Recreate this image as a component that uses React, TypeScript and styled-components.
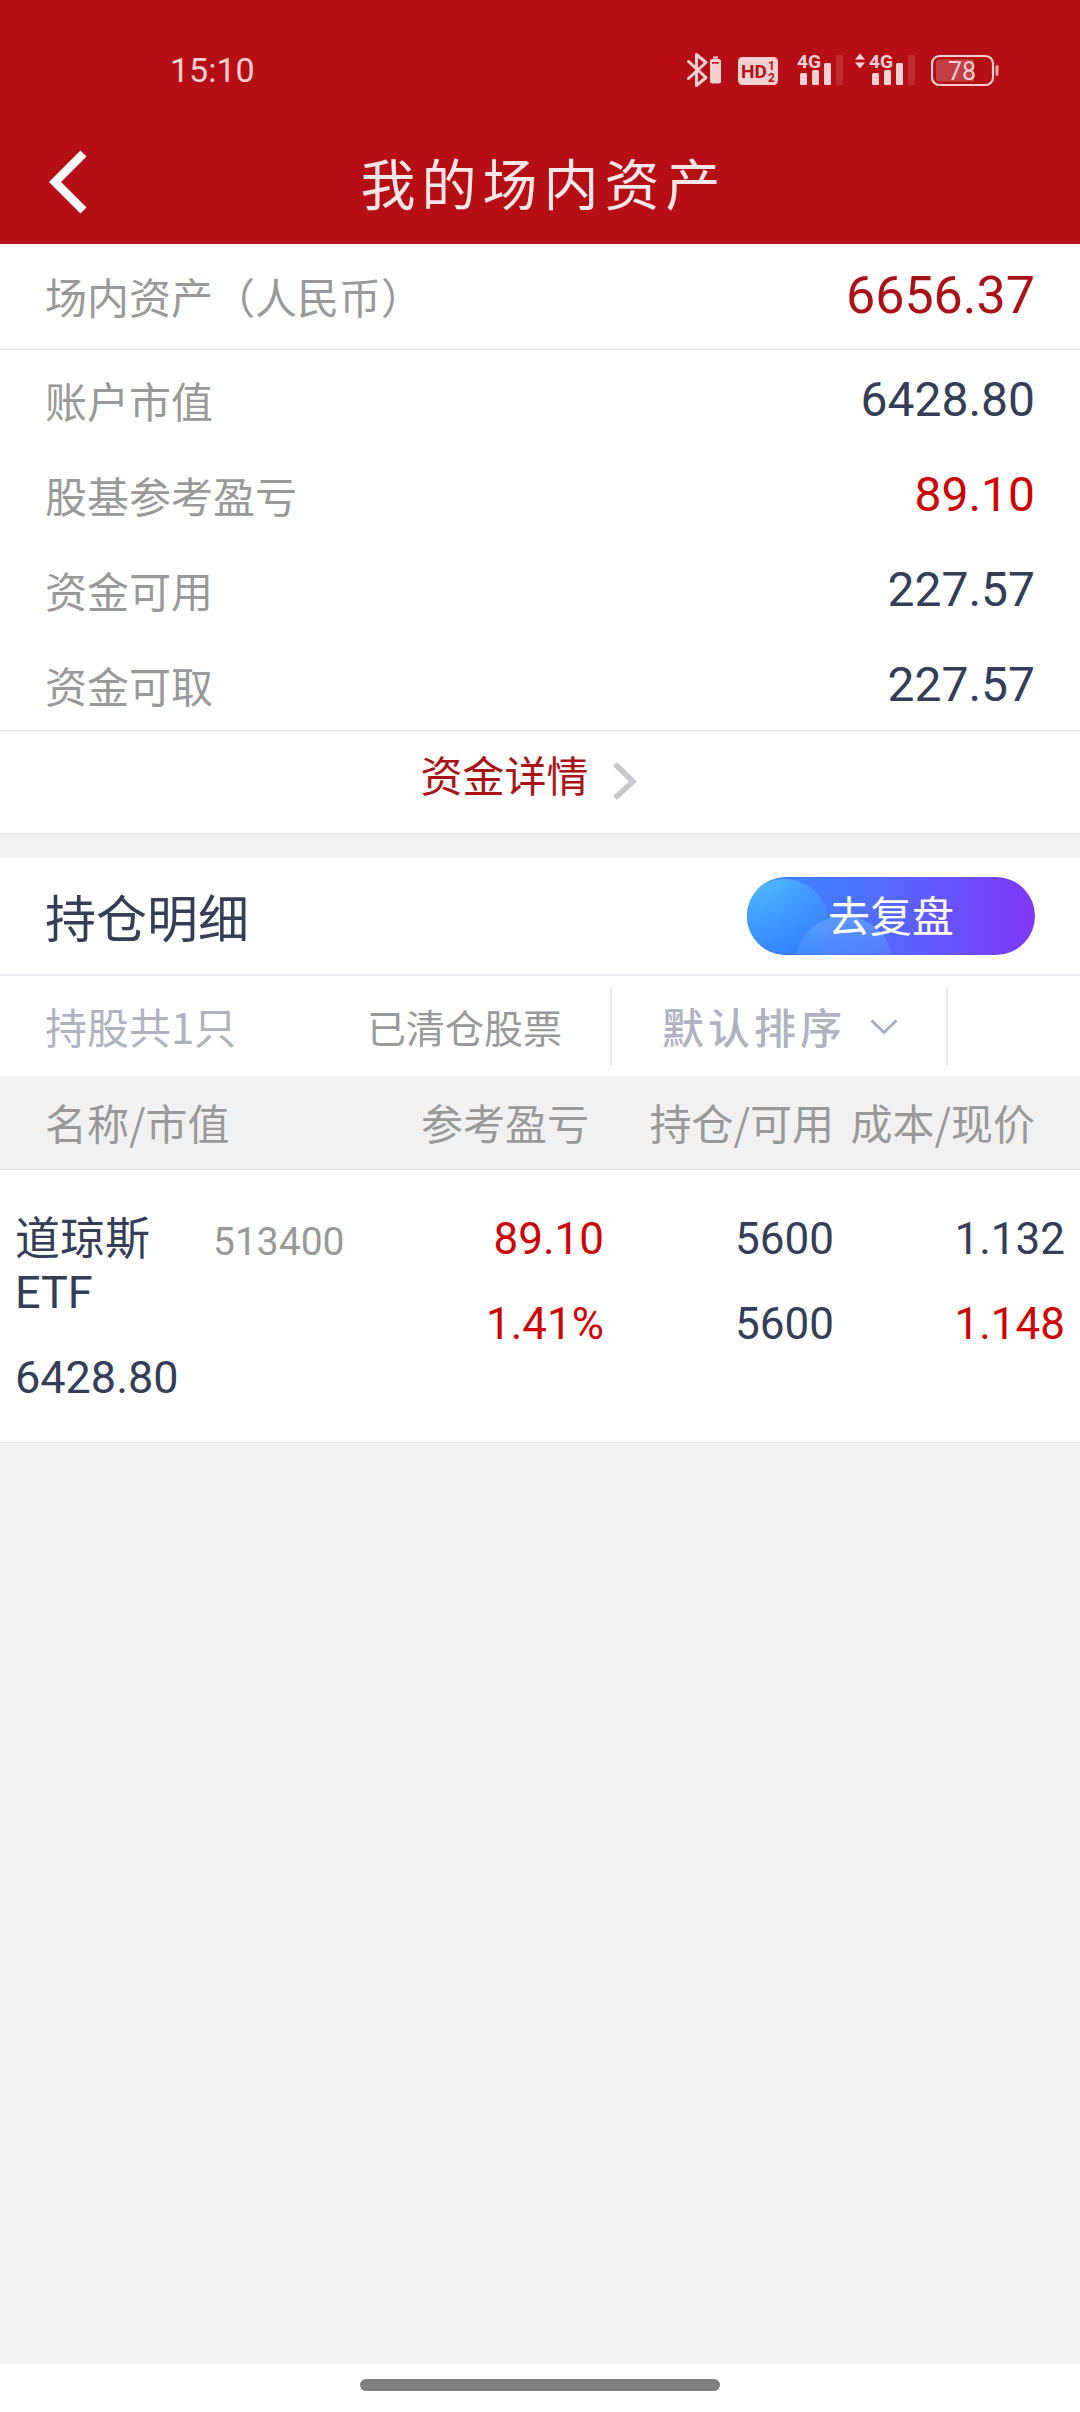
import React from "react";
import styled, { createGlobalStyle } from "styled-components";

const cjk = `"Noto Sans CJK SC", Roboto, sans-serif`;
const latin = `Roboto, "Noto Sans CJK SC", sans-serif`;

const color = {
  brand: "#b50f15",
  red: "#cc0505",
  deepRed: "#aa1217",
  ink: "#363d56",
  grey: "#999999",
  muted: "#b0b3be",
  line: "#e3e4e5",
  divider: "#e6eaef",
  page: "#f1f1f1",
  status: "#f5d0d3",
};

const tones = { ink: color.ink, red: color.red, deep: color.deepRed };
type Tone = keyof typeof tones;

const GlobalStyle = createGlobalStyle`
  * { box-sizing: border-box; }
  body { margin: 0; background: ${color.page}; }
  button, select { font: inherit; color: inherit; border: 0; padding: 0; background: none; cursor: pointer; }
  svg { display: block; flex: none; }
`;

const Screen = styled.div`
  display: flex;
  flex-direction: column;
  min-height: 100vh;
  font-family: ${cjk};
  font-size: 42px;
  line-height: 54px;
  color: ${color.grey};
`;

const Header = styled.header`
  background: ${color.brand};
`;

const StatusBar = styled.div`
  display: flex;
  align-items: center;
  justify-content: space-between;
  height: 120px;
  padding: 20px 81px 0 170px;
  color: ${color.status};
`;

const Clock = styled.time`
  font-family: Roboto, sans-serif;
  font-size: 34px;
`;

const StatusIcons = styled.div`
  display: flex;
  gap: 12px;
`;

const NavBar = styled.div`
  display: grid;
  grid-template-columns: 135px 1fr 135px;
  align-items: center;
  height: 124px;
`;

const BackButton = styled.button`
  display: flex;
  align-items: center;
  height: 100%;
  padding-left: 48px;
`;

const PageTitle = styled.h1`
  margin: 0;
  padding: 0 0 2px 7px;
  font-size: 55px;
  font-weight: 400;
  letter-spacing: 6px;
  text-align: center;
  color: #f6e6e7;
`;

const Summary = styled.section`
  background: #fff;
  border-bottom: 1px solid ${color.line};
`;

const SummaryRow = styled.div`
  display: flex;
  align-items: center;
  justify-content: space-between;
  padding: 0 45px;
`;

const TotalRow = styled(SummaryRow)`
  padding: 25px 45px 26px;
  border-bottom: 1px solid ${color.line};
`;

const SummaryList = styled.div`
  display: flex;
  flex-direction: column;
  gap: 41px;
  padding: 23px 0 18px;
`;

const Amount = styled.span<{ $tone?: Tone; $large?: boolean }>`
  font-family: ${latin};
  font-size: ${(p) => (p.$large ? 52 : 48)}px;
  color: ${(p) => tones[p.$tone ?? "ink"]};
`;

const DetailLink = styled.a`
  display: flex;
  align-items: flex-end;
  justify-content: center;
  gap: 23px;
  padding: 16px 22px 32px 0;
  border-top: 1px solid ${color.line};
  color: ${color.deepRed};
  text-decoration: none;
`;

const Holdings = styled.section`
  margin-top: 24px;
  background: #fff;
  border-bottom: 1px solid ${color.line};
`;

const HoldingsHead = styled.div`
  display: flex;
  align-items: center;
  justify-content: space-between;
  padding: 19px 45px;
  border-bottom: 2px solid ${color.divider};
`;

const SectionTitle = styled.h2`
  margin: 0;
  font-size: 51px;
  font-weight: 400;
  color: ${color.ink};
`;

const ReviewButton = styled.button`
  position: relative;
  width: 288px;
  height: 78px;
  padding-bottom: 4px;
  border-radius: 39px;
  overflow: hidden;
  color: #fff;
  background: linear-gradient(90deg, #2f8bff 0%, #4a74ff 36%, #5a62fd 55%, #8037f7 100%);
`;

const ReviewArt = styled.svg`
  position: absolute;
  inset: 0;
`;

const ReviewLabel = styled.span`
  position: relative;
`;

const FilterBar = styled.div`
  display: grid;
  grid-template-columns: 1fr 338px 132px;
  align-items: center;
  height: 100px;
`;

const FilterInfo = styled.div`
  display: flex;
  align-items: center;
  justify-content: space-between;
  padding: 0 48px 0 45px;
  color: ${color.muted};
`;

const ClearedButton = styled.button`
  font-size: 39px;
  color: ${color.grey};
`;

const SortBox = styled.div`
  position: relative;
  border: solid ${color.divider};
  border-width: 0 2px;
`;

const SortSelect = styled.select`
  display: block;
  appearance: none;
  width: 100%;
  height: 78px;
  padding-left: 50px;
  font-weight: 500;
  letter-spacing: 4px;
  color: ${color.muted};
`;

const SortArrow = styled.svg`
  position: absolute;
  top: 32px;
  right: 48px;
  pointer-events: none;
`;

const Table = styled.table`
  width: 100%;
  table-layout: fixed;
  border-collapse: separate;
  border-spacing: 0;
`;

const HeadCell = styled.th<{ $left?: boolean; $last?: boolean }>`
  width: ${(p) => (p.$left ? "auto" : p.$last ? "246px" : "230px")};
  height: 94px;
  padding: 0 ${(p) => (p.$last ? 45 : 0)}px 2px ${(p) => (p.$left ? 45 : 0)}px;
  font-weight: 400;
  text-align: ${(p) => (p.$left ? "left" : "right")};
  white-space: nowrap;
  background: ${color.page};
  border-bottom: 1px solid ${color.line};
`;

const ProfitHeadCell = styled(HeadCell)`
  padding-right: 15px;
`;

const Cell = styled.td<{ $left?: boolean; $last?: boolean }>`
  padding: 43px ${(p) => (p.$last ? 15 : 0)}px 38px ${(p) => (p.$left ? 15 : 0)}px;
  vertical-align: top;
  text-align: ${(p) => (p.$left ? "left" : "right")};
  font-family: ${latin};
  font-size: ${(p) => (p.$left ? 45 : 44)}px;
  line-height: 53px;
  color: ${color.ink};
`;

const Stack = styled.div`
  display: flex;
  flex-direction: column;
  gap: 32px;
`;

const Figure = styled.span<{ $tone?: Tone }>`
  color: ${(p) => tones[p.$tone ?? "ink"]};
`;

const NameLine = styled.div`
  display: grid;
  grid-template-columns: 198px 1fr;
  align-items: baseline;
`;

const StockName = styled.span`
  padding-right: 48px;
`;

const StockCode = styled.span`
  font-size: 39px;
  color: ${color.grey};
`;

const GestureArea = styled.footer`
  display: flex;
  align-items: center;
  justify-content: center;
  height: 48px;
  margin-top: auto;
  padding-bottom: 6px;
  background: #fff;
`;

const GesturePill = styled.div`
  width: 360px;
  height: 12px;
  border-radius: 6px;
  background: #808080;
`;

const BluetoothIcon = () => (
  <svg width="39" height="42" viewBox="0 -4 39 42" aria-hidden="true">
    <path
      d="M1.500 8.500 19 24.500 9.500 32.500V1.500L19 9.500 1.500 25.500"
      fill="none"
      stroke={color.status}
      strokeWidth="3"
      strokeLinejoin="round"
      strokeLinecap="round"
    />
    <rect x="26" y="3.500" width="5" height="2" fill={color.status} />
    <rect x="23" y="6" width="11" height="24.500" rx="2.500" fill={color.status} />
    <rect x="25" y="9" width="7" height="1.600" fill={color.brand} />
  </svg>
);

const HdIcon = () => (
  <svg width="44" height="42" viewBox="0 -4 44 42" fontFamily="Roboto, sans-serif" fontWeight="700" aria-hidden="true">
    <rect y="4" width="40" height="28" rx="4.500" fill={color.status} />
    <text x="3" y="25" fontSize="19" fill={color.brand}>HD</text>
    <text x="30" y="17" fontSize="12" fill={color.brand}>1</text>
    <text x="30" y="29" fontSize="12" fill={color.brand}>2</text>
  </svg>
);

const SignalIcon = ({ data }: { data?: boolean }) => {
  const x = data ? 17 : 6;
  const width = data ? 64 : 49;
  return (
    <svg width={width} height="42" viewBox={`0 -4 ${width} 42`} fill={color.status} aria-hidden="true">
      {data && <path d="M0 6.500 5 .5l5 6zM0 9.500h10l-5 6z" />}
      <text x={x - 3} y="15" fontSize="19" fontFamily="Roboto, sans-serif" fontWeight="700">4G</text>
      <rect x={x} y="20" width="7" height="12" rx="1.500" />
      <rect x={x + 12} y="17" width="7" height="15" rx="1.500" />
      <rect x={x + 24} y="10" width="7" height="22" rx="1.500" />
      <rect x={x + 36} y="2" width="7" height="30" rx="1.500" opacity="0.150" />
    </svg>
  );
};

const BatteryIcon = () => (
  <svg width="68" height="42" viewBox="0 -4 68 42" aria-hidden="true">
    <rect x="1" y="3" width="61" height="29" rx="7.500" fill="none" stroke={color.status} strokeWidth="2.200" />
    <path d="M8 6.500h35v22H8a3 3 0 0 1-3-3v-16a3 3 0 0 1 3-3z" fill={color.status} opacity="0.250" />
    <rect x="64.500" y="12" width="3" height="11" rx="1.500" fill={color.status} opacity="0.800" />
    <text x="17" y="26.500" fontSize="25" fontFamily="Roboto, sans-serif" fill={color.status}>78</text>
  </svg>
);

const BackIcon = () => (
  <svg width="40" height="64" viewBox="0 0 40 64" aria-hidden="true">
    <path d="M35.500 3.500 7 32l28.500 28.500" fill="none" stroke="#fff" strokeWidth="8.500" />
  </svg>
);

const ArrowIcon = () => (
  <svg width="26" height="40" viewBox="0 0 26 40" aria-hidden="true">
    <path d="M3 3 21 20.500 3 37" fill="none" stroke="#c8c8cc" strokeWidth="5.500" />
  </svg>
);

const ReviewBackdrop = () => (
  <ReviewArt width="288" height="78" viewBox="0 0 288 78" aria-hidden="true">
    <defs>
      <linearGradient id="bubbleA" x1="0.300" y1="0" x2="0.600" y2="1">
        <stop offset="0" stopColor="#4fb6ff" />
        <stop offset="1" stopColor="#2b78ff" />
      </linearGradient>
      <linearGradient id="bubbleB" x1="0" y1="0" x2="0" y2="1">
        <stop offset="0" stopColor="#62a4ff" stopOpacity="0.750" />
        <stop offset="0.450" stopColor="#62a4ff" stopOpacity="0.200" />
      </linearGradient>
      <linearGradient id="bubbleFade" x1="0" y1="0" x2="1" y2="0">
        <stop offset="0.400" stopColor="#fff" />
        <stop offset="1" stopColor="#fff" stopOpacity="0.500" />
      </linearGradient>
      <mask id="bubbleMask">
        <rect width="92" height="92" y="0" x="-8" fill="url(#bubbleFade)" />
      </mask>
    </defs>
    <circle cx="37" cy="47" r="45" fill="url(#bubbleA)" mask="url(#bubbleMask)" />
    <circle cx="97" cy="88" r="49" fill="url(#bubbleB)" />
  </ReviewArt>
);

const rows: { label: string; value: string; tone?: Tone }[] = [
  { label: "账户市值", value: "6428.80" },
  { label: "股基参考盈亏", value: "89.10", tone: "red" },
  { label: "资金可用", value: "227.57" },
  { label: "资金可取", value: "227.57" },
];

export default function App() {
  return (
    <Screen lang="zh-CN">
      <GlobalStyle />
      <Header>
        <StatusBar>
          <Clock>15:10</Clock>
          <StatusIcons>
            <BluetoothIcon />
            <HdIcon />
            <SignalIcon />
            <SignalIcon data />
            <BatteryIcon />
          </StatusIcons>
        </StatusBar>
        <NavBar>
          <BackButton type="button" aria-label="返回">
            <BackIcon />
          </BackButton>
          <PageTitle>我的场内资产</PageTitle>
        </NavBar>
      </Header>

      <main>
        <Summary>
          <TotalRow>
            <span>场内资产（人民币）</span>
            <Amount $large $tone="deep">6656.37</Amount>
          </TotalRow>
          <SummaryList>
            {rows.map((row) => (
              <SummaryRow key={row.label}>
                <span>{row.label}</span>
                <Amount $tone={row.tone}>{row.value}</Amount>
              </SummaryRow>
            ))}
          </SummaryList>
          <DetailLink href="#detail">
            资金详情
            <ArrowIcon />
          </DetailLink>
        </Summary>

        <Holdings>
          <HoldingsHead>
            <SectionTitle>持仓明细</SectionTitle>
            <ReviewButton type="button">
              <ReviewBackdrop />
              <ReviewLabel>去复盘</ReviewLabel>
            </ReviewButton>
          </HoldingsHead>
          <FilterBar>
            <FilterInfo>
              <span>持股共1只</span>
              <ClearedButton type="button">已清仓股票</ClearedButton>
            </FilterInfo>
            <SortBox>
              <SortSelect aria-label="排序方式">
                <option>默认排序</option>
              </SortSelect>
              <SortArrow width="28" height="16" viewBox="0 0 28 16" aria-hidden="true">
                <path d="M1.500 1.500 14 13.500 26.500 1.500" fill="none" stroke="#a7b0c3" strokeWidth="3" />
              </SortArrow>
            </SortBox>
          </FilterBar>
          <Table>
            <thead>
              <tr>
                <HeadCell scope="col" $left>名称/市值</HeadCell>
                <ProfitHeadCell scope="col">参考盈亏</ProfitHeadCell>
                <HeadCell scope="col">持仓/可用</HeadCell>
                <HeadCell scope="col" $last>成本/现价</HeadCell>
              </tr>
            </thead>
            <tbody>
              <tr>
                <Cell $left>
                  <Stack>
                    <NameLine>
                      <StockName>道琼斯ETF</StockName>
                      <StockCode>513400</StockCode>
                    </NameLine>
                    <Figure>6428.80</Figure>
                  </Stack>
                </Cell>
                <Cell>
                  <Stack>
                    <Figure $tone="red">89.10</Figure>
                    <Figure $tone="red">1.41%</Figure>
                  </Stack>
                </Cell>
                <Cell>
                  <Stack>
                    <Figure>5600</Figure>
                    <Figure>5600</Figure>
                  </Stack>
                </Cell>
                <Cell $last>
                  <Stack>
                    <Figure>1.132</Figure>
                    <Figure $tone="red">1.148</Figure>
                  </Stack>
                </Cell>
              </tr>
            </tbody>
          </Table>
        </Holdings>
      </main>

      <GestureArea>
        <GesturePill />
      </GestureArea>
    </Screen>
  );
}
